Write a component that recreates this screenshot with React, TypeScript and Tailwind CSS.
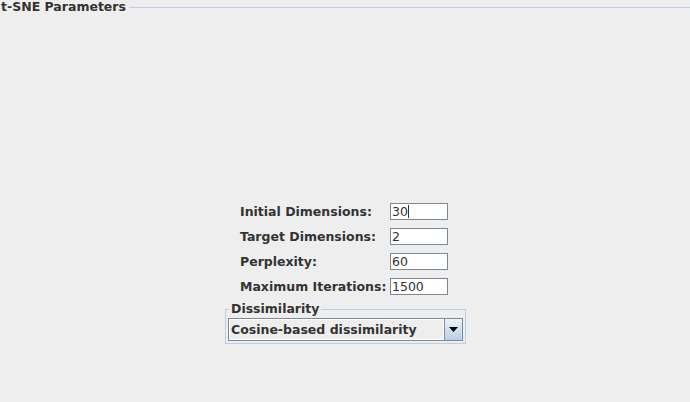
const font = "font-['DejaVu_Sans',sans-serif]";

const params = [
  { label: 'Initial Dimensions:', value: '30', caret: true },
  { label: 'Target Dimensions:', value: '2' },
  { label: 'Perplexity:', value: '60' },
  { label: 'Maximum Iterations:', value: '1500' },
];

function Field({ value, caret }: { value: string; caret?: boolean }) {
  return (
    <div className="w-[58px] h-[17px] border border-[#7a8a99] bg-white flex items-center pl-[1px]">
      <span className="text-[12.5px] leading-[15px] text-[#333333]">{value}</span>
      {caret && <span className="w-px h-[13px] bg-[#333333]" />}
    </div>
  );
}

export default function App() {
  return (
    <div className={`w-[690px] h-[402px] bg-[#eeeeee] overflow-hidden flex flex-col ${font}`}>
      {/* Panel title */}
      <div className="flex items-center h-[14px]">
        <span className="text-[12.5px] font-bold leading-[14px] text-[#333333] pl-[1px] pr-[3px]">
          t-SNE Parameters
        </span>
        <div className="flex-1 h-px bg-[#b8cfe5]" />
      </div>

      <div className="ml-[225px] mt-[189px] w-[241px] flex flex-col">
        <div className="flex flex-col gap-[8px]">
          {params.map((p) => (
            <div key={p.label} className="flex items-center pl-[15px]">
              <span className="w-[150px] text-[12.5px] font-bold leading-[14px] text-[#333333]">
                {p.label}
              </span>
              <Field value={p.value} caret={p.caret} />
            </div>
          ))}
        </div>

        {/* Dissimilarity group */}
        <div className="relative mt-[14px] border border-[#b8cfe5] pt-[8px] pb-[2px] px-[2px]">
          <span className="absolute left-[3px] top-[-8px] bg-[#eeeeee] px-[2px] text-[12.5px] font-bold leading-[14px] text-[#333333]">
            Dissimilarity
          </span>
          <div className="h-[23px] border border-[#7a8a99] bg-[#eeeeee] flex">
            <div className="flex-1 border border-white flex items-center pl-[1px]">
              <span className="text-[12.5px] font-bold leading-[14px] text-[#333333]">
                Cosine-based dissimilarity
              </span>
            </div>
            <div className="w-[18px] border-l border-[#7a8a99] bg-gradient-to-b from-[#eef3f9] to-[#b8cfe5] flex items-center justify-center">
              <svg width="9" height="5" viewBox="0 0 9 5">
                <path d="M0 0h9L4.5 5z" fill="#000" />
              </svg>
            </div>
          </div>
        </div>
      </div>
    </div>
  );
}
